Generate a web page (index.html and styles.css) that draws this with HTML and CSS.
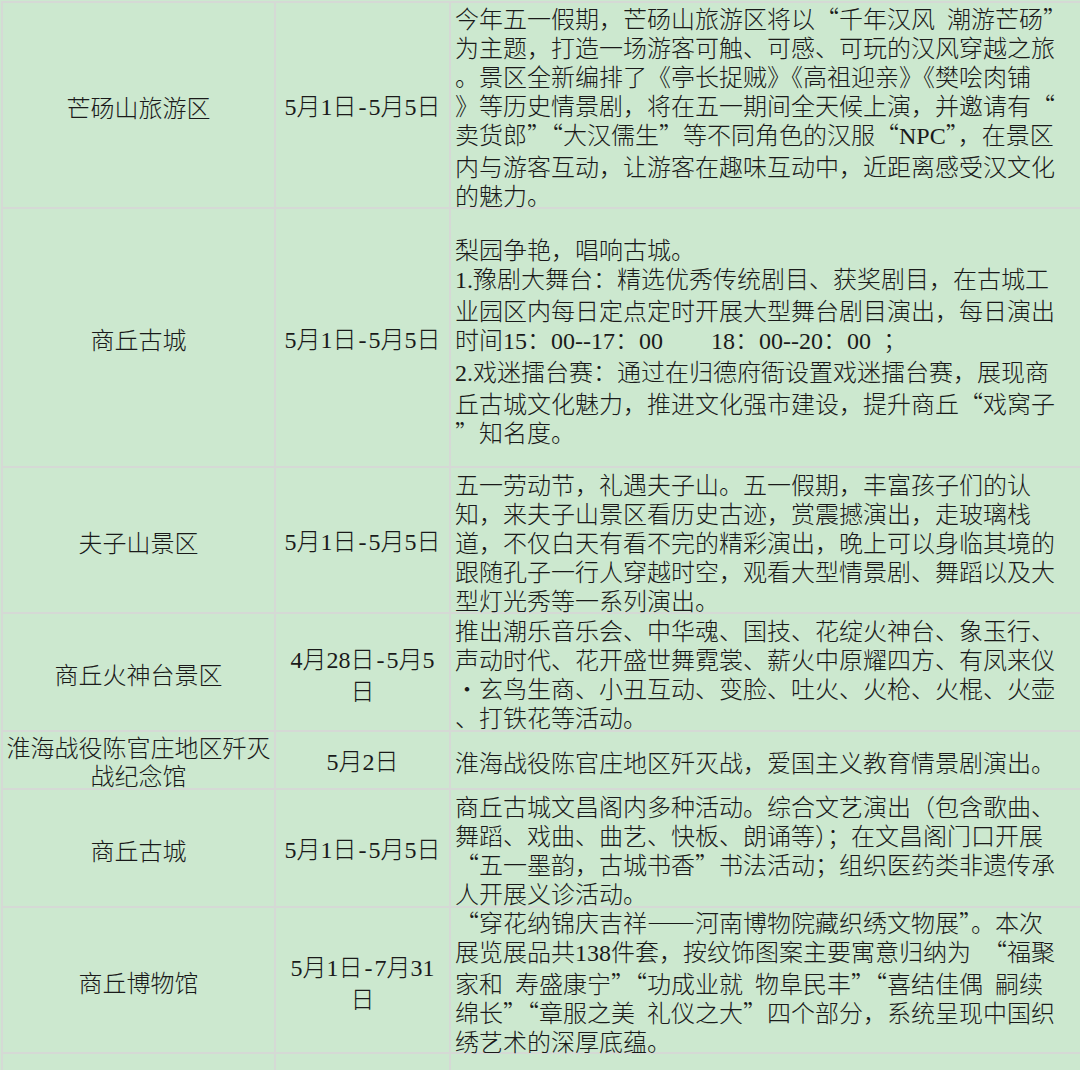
FILE: index.html
```html
<!DOCTYPE html>
<html lang="zh-CN">
<head>
<meta charset="utf-8">
<title>五一活动安排</title>
<link rel="stylesheet" href="styles.css">
</head>
<body>
<div class="sheet">
  <div class="cell name"><div class="t">芒砀山旅游区</div></div>
  <div class="cell date"><div class="t"><span class="lat">5</span>月<span class="lat">1</span>日<span class="lat dash">-</span><span class="lat">5</span>月<span class="lat">5</span>日</div></div>
  <div class="cell desc"><div class="t">今年五一假期，芒砀山旅游区将以“千年汉风&ensp;潮游芒砀”<br>为主题，打造一场游客可触、可感、可玩的汉风穿越之旅<br>。景区全新编排了《亭长捉贼》《高祖迎亲》《樊哙肉铺<br>》等历史情景剧，将在五一期间全天候上演，并邀请有“<br>卖货郎”“大汉儒生”等不同角色的汉服“<span class="lat">NPC</span>”，在景区<br>内与游客互动，让游客在趣味互动中，近距离感受汉文化<br>的魅力。</div></div>

  <div class="cell name"><div class="t">商丘古城</div></div>
  <div class="cell date"><div class="t"><span class="lat">5</span>月<span class="lat">1</span>日<span class="lat dash">-</span><span class="lat">5</span>月<span class="lat">5</span>日</div></div>
  <div class="cell desc blanked"><div class="t">梨园争艳，唱响古城。<br><span class="lat">1.</span>豫剧大舞台：精选优秀传统剧目、获奖剧目，在古城工<br>业园区内每日定点定时开展大型舞台剧目演出，每日演出<br>时间<span class="lat">15</span>：<span class="lat">00--17</span>：<span class="lat">00</span>　　<span class="lat">18</span>：<span class="lat">00--20</span>：<span class="lat">00</span>&ensp;；<br><span class="lat">2.</span>戏迷擂台赛：通过在归德府衙设置戏迷擂台赛，展现商<br>丘古城文化魅力，推进文化强市建设，提升商丘“戏窝子<br>”知名度。</div></div>

  <div class="cell name"><div class="t">夫子山景区</div></div>
  <div class="cell date"><div class="t"><span class="lat">5</span>月<span class="lat">1</span>日<span class="lat dash">-</span><span class="lat">5</span>月<span class="lat">5</span>日</div></div>
  <div class="cell desc"><div class="t">五一劳动节，礼遇夫子山。五一假期，丰富孩子们的认<br>知，来夫子山景区看历史古迹，赏震撼演出，走玻璃栈<br>道，不仅白天有看不完的精彩演出，晚上可以身临其境的<br>跟随孔子一行人穿越时空，观看大型情景剧、舞蹈以及大<br>型灯光秀等一系列演出。</div></div>

  <div class="cell name"><div class="t">商丘火神台景区</div></div>
  <div class="cell date"><div class="t"><span class="lat">4</span>月<span class="lat">28</span>日<span class="lat dash">-</span><span class="lat">5</span>月<span class="lat">5</span><br>日</div></div>
  <div class="cell desc"><div class="t">推出潮乐音乐会、中华魂、国技、花绽火神台、象玉行、<br>声动时代、花开盛世舞霓裳、薪火中原耀四方、有凤来仪<br>·玄鸟生商、小丑互动、变脸、吐火、火枪、火棍、火壶<br>、打铁花等活动。</div></div>

  <div class="cell name tight"><div class="t">淮海战役陈官庄地区歼灭<br>战纪念馆</div></div>
  <div class="cell date"><div class="t"><span class="lat">5</span>月<span class="lat">2</span>日</div></div>
  <div class="cell desc"><div class="t">淮海战役陈官庄地区歼灭战，爱国主义教育情景剧演出。</div></div>

  <div class="cell name"><div class="t">商丘古城</div></div>
  <div class="cell date"><div class="t"><span class="lat">5</span>月<span class="lat">1</span>日<span class="lat dash">-</span><span class="lat">5</span>月<span class="lat">5</span>日</div></div>
  <div class="cell desc"><div class="t">商丘古城文昌阁内多种活动。综合文艺演出（包含歌曲、<br>舞蹈、戏曲、曲艺、快板、朗诵等）；在文昌阁门口开展<br>“五一墨韵，古城书香”书法活动；组织医药类非遗传承<br>人开展义诊活动。</div></div>

  <div class="cell name"><div class="t">商丘博物馆</div></div>
  <div class="cell date"><div class="t"><span class="lat">5</span>月<span class="lat">1</span>日<span class="lat dash">-</span><span class="lat">7</span>月<span class="lat">31</span><br>日</div></div>
  <div class="cell desc"><div class="t">“穿花纳锦庆吉祥——河南博物院藏织绣文物展”。本次<br>展览展品共<span class="lat">138</span>件套，按纹饰图案主要寓意归纳为&ensp;“福聚<br>家和&ensp;寿盛康宁”“功成业就&ensp;物阜民丰”“喜结佳偶&ensp;嗣续<br>绵长”“章服之美&ensp;礼仪之大”四个部分，系统呈现中国织<br>绣艺术的深厚底蕴。</div></div>

  <div class="cell name"></div>
  <div class="cell date"></div>
  <div class="cell desc"></div>
</div>
</body>
</html>
```

FILE: styles.css
```css
html, body {
  margin: 0;
  padding: 0;
  background: #cce8cf;
  overflow: hidden;
}

.sheet {
  margin: 1px 0 0 1px;
  padding: 2px 0 0 2px;
  display: grid;
  grid-template-columns: 271px 173px 1fr;
  grid-template-rows: 204px 257px 144px 116px 56px 116px 144px 40px;
  gap: 2px;
  background: #d5d9d5;
  font-family: "Noto Sans CJK SC", "Noto Sans", sans-serif;
  font-size: 24px;
  font-weight: 300;
  line-height: 29px;
  color: #1a1a1a;
}

.cell {
  background: #cce8cf;
  display: flex;
  align-items: center;
  padding-top: 2px;
  box-sizing: border-box;
  min-width: 0;
}

.t {
  white-space: nowrap;
}

.name,
.date {
  justify-content: center;
  text-align: center;
}

.desc {
  padding-left: 4px;
}

.blanked {
  padding-top: 4px;
}

.tight {
  line-height: 28px;
}

.lat {
  font-family: "Liberation Serif", serif;
  font-weight: 400;
}

.dash {
  display: inline-block;
  width: 12px;
  text-align: center;
}
```
